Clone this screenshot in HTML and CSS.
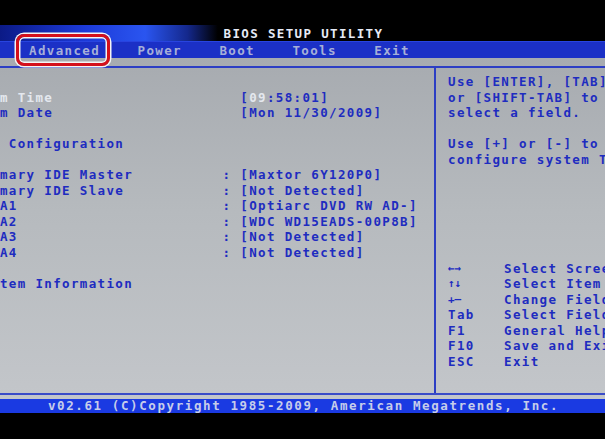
FILE: index.html
```html
<!DOCTYPE html>
<html lang="en">
<head>
<meta charset="utf-8">
<title>BIOS SETUP UTILITY</title>
<link rel="stylesheet" href="styles.css">
</head>
<body>
<div class="screen">
  <header class="titlebar"><span class="title">BIOS SETUP UTILITY</span></header>
  <nav class="menubar">
    <span class="tab tab-marked">Advanced</span>
    <span class="tab">Power</span>
    <span class="tab">Boot</span>
    <span class="tab">Tools</span>
    <span class="tab">Exit</span>
  </nav>
  <div class="frame">
    <main class="panel">
      <section class="items">
        <div class="row"></div>
        <div class="row current"><span class="label">System Time</span><span class="sep"></span><span class="value">[<b class="field">09</b>:58:01]</span></div>
        <div class="row"><span class="label">System Date</span><span class="sep"></span><span class="value">[Mon 11/30/2009]</span></div>
        <div class="row"></div>
        <div class="row"><span class="label">&#9658; IDE Configuration</span></div>
        <div class="row"></div>
        <div class="row"><span class="label">&#9658; Primary IDE Master</span><span class="sep">:</span><span class="value">[Maxtor 6Y120P0]</span></div>
        <div class="row"><span class="label">&#9658; Primary IDE Slave</span><span class="sep">:</span><span class="value">[Not Detected]</span></div>
        <div class="row"><span class="label">&#9658; SATA1</span><span class="sep">:</span><span class="value">[Optiarc DVD RW AD-]</span></div>
        <div class="row"><span class="label">&#9658; SATA2</span><span class="sep">:</span><span class="value">[WDC WD15EADS-00P8B]</span></div>
        <div class="row"><span class="label">&#9658; SATA3</span><span class="sep">:</span><span class="value">[Not Detected]</span></div>
        <div class="row"><span class="label">&#9658; SATA4</span><span class="sep">:</span><span class="value">[Not Detected]</span></div>
        <div class="row"></div>
        <div class="row"><span class="label">&#9658; System Information</span></div>
      </section>
      <aside class="help">
        <p class="help-line">Use [ENTER], [TAB]</p>
        <p class="help-line">or [SHIFT-TAB] to</p>
        <p class="help-line">select a field.</p>
        <p class="help-line"></p>
        <p class="help-line">Use [+] or [-] to</p>
        <p class="help-line">configure system Time.</p>
        <div class="keys">
          <span class="key arrows">&#8592;&#8594;</span><span class="desc">Select Screen</span>
          <span class="key arrows">&#8593;&#8595;</span><span class="desc">Select Item</span>
          <span class="key arrows">+&#8211;</span><span class="desc">Change Field</span>
          <span class="key">Tab</span><span class="desc">Select Field</span>
          <span class="key">F1</span><span class="desc">General Help</span>
          <span class="key">F10</span><span class="desc">Save and Exit</span>
          <span class="key">ESC</span><span class="desc">Exit</span>
        </div>
      </aside>
    </main>
  </div>
  <footer class="statusbar">v02.61 (C)Copyright 1985-2009, American Megatrends, Inc.</footer>
</div>
</body>
</html>
```
FILE: styles.css
```css
html, body {
  margin: 0;
  padding: 0;
  background: #000;
}

*, *::before, *::after {
  box-sizing: border-box;
}

body {
  width: 605px;
  height: 439px;
  overflow: hidden;
  font-family: "DejaVu Sans Mono", "Liberation Mono", monospace;
  font-weight: bold;
  font-size: 12.5px;
  letter-spacing: 1.35px;
}

.screen {
  padding-top: 25px;
  display: flex;
  flex-direction: column;
}

/* top title row */
.titlebar {
  height: 16px;
  display: flex;
  align-items: center;
  justify-content: center;
  background: linear-gradient(to right, #0b1a86 0%, #1c3ad8 14%, #2a55f0 24%, #14288c 31%, #000 36%, #000 100%);
}

.title {
  color: #e6eaf6;
  padding-left: 2px;
}

/* tab row */
.menubar {
  height: 17px;
  display: flex;
  align-items: center;
  gap: 37.5px;
  padding-left: 29px;
  background: #1b30c6;
  border-top: 1px solid #2844e0;
}

.tab {
  color: #a6afd8;
}

/* red marker drawn round the Advanced tab */
.tab-marked {
  position: relative;
}

.tab-marked::after {
  content: "";
  position: absolute;
  left: -13px;
  top: -9px;
  width: 94px;
  height: 32px;
  border: 3px solid #d4101c;
  border-radius: 8px;
  box-shadow: 0 0 0 1.5px #f4f4f4, inset 0 0 0 1.5px #f4f4f4;
}

/* grey work area */
.frame {
  height: 341px;
  padding: 8px 0 4px;
  background: linear-gradient(to bottom, #a7abb0 0%, #b6babe 45%, #c3c6ca 100%);
  display: flex;
  flex-direction: column;
}

.panel {
  flex: 1;
  min-height: 0;
  display: flex;
  border-top: 2px solid #2c3ec4;
  border-bottom: 2px solid #3a4cc8;
  color: #1e2cc0;
}

.items {
  width: 436px;
  border-right: 2px solid #2c3ec4;
  overflow: hidden;
  padding-top: 6px;
}

.row {
  height: 15.55px;
  display: grid;
  grid-template-columns: 267px 17.8px auto;
  margin-left: -44.5px;
  white-space: pre;
  line-height: 15.55px;
}

.row.current .label {
  color: #e4e8ee;
}

.field {
  color: #e4e8ee;
}

.help {
  flex: 1;
  min-width: 0;
  padding: 6px 0 0 12px;
  overflow: hidden;
}

.help-line {
  margin: 0;
  height: 15.55px;
  line-height: 15.55px;
  white-space: pre;
}

.keys {
  margin-top: 93.3px;
  display: grid;
  grid-template-columns: 56px auto;
  grid-auto-rows: 15.55px;
  line-height: 15.55px;
  white-space: pre;
}

.arrows {
  font-size: 11px;
  letter-spacing: 0;
}

/* bottom copyright bar */
.statusbar {
  height: 14px;
  background: #1a3ae2;
  color: #c6cdea;
  text-align: center;
  line-height: 14px;
  letter-spacing: 1.6px;
  padding-left: 2px;
  white-space: nowrap;
}
```
